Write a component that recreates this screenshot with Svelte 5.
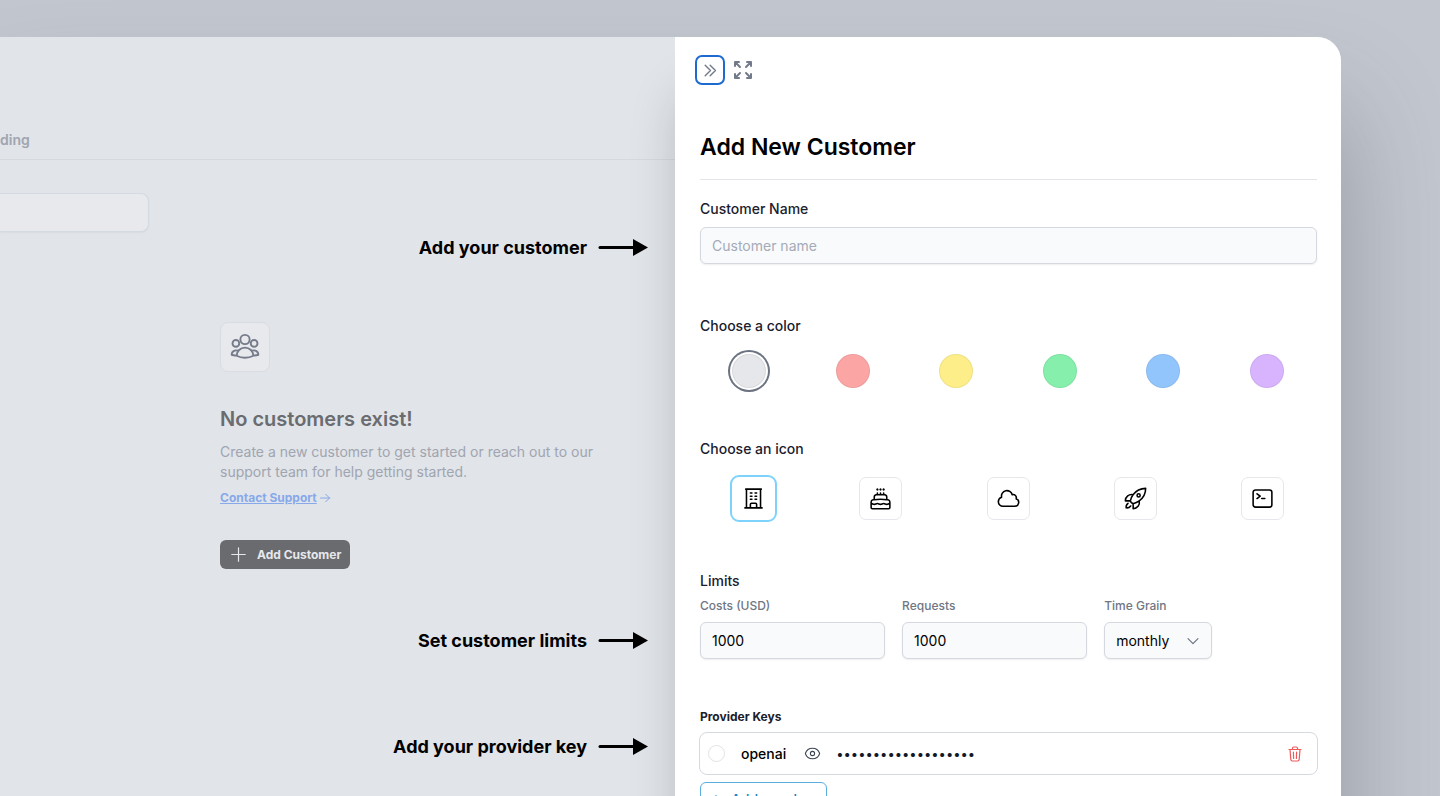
<script>
  const colors = [
    { name: 'Gray', value: '#e5e7eb' },
    { name: 'Red', value: '#fca5a5' },
    { name: 'Yellow', value: '#fdee8a' },
    { name: 'Green', value: '#86efac' },
    { name: 'Blue', value: '#93c5fd' },
    { name: 'Purple', value: '#d8b4fe' }
  ];

  const icons = [
    {
      name: 'Building',
      path: 'M3.75 21h16.5M4.5 3h15M5.25 3v18m13.5-18v18M9 6.75h1.5m-1.5 3h1.5m-1.5 3h1.5m3-6H15m-1.5 3H15m-1.5 3H15M9 21v-3.375c0-.621.504-1.125 1.125-1.125h3.75c.621 0 1.125.504 1.125 1.125V21'
    },
    {
      name: 'Cake',
      path: 'M12 8.25v-1.5m0 1.5c-1.355 0-2.697.056-4.024.166C6.845 8.51 6 9.473 6 10.608v2.513m6-4.871c1.355 0 2.697.056 4.024.166C17.155 8.51 18 9.473 18 10.608v2.513M15 8.25v-1.5m-6 1.5v-1.5m12 9.75-1.5.75a3.354 3.354 0 0 1-3 0 3.354 3.354 0 0 0-3 0 3.354 3.354 0 0 1-3 0 3.354 3.354 0 0 0-3 0 3.354 3.354 0 0 1-3 0L3 16.5m15-3.379a48.474 48.474 0 0 0-6-.371c-2.032 0-4.034.126-6 .371m12 0c.39.049.777.102 1.163.16 1.07.16 1.837 1.094 1.837 2.175v5.169c0 .621-.504 1.125-1.125 1.125H4.125A1.125 1.125 0 0 1 3 20.625v-5.17c0-1.08.768-2.014 1.837-2.174A47.78 47.78 0 0 1 6 13.12M12.265 3.11a.375.375 0 1 1-.53 0L12 2.845l.265.265Zm-3 0a.375.375 0 1 1-.53 0L9 2.845l.265.265Zm6 0a.375.375 0 1 1-.53 0L15 2.845l.265.265Z'
    },
    {
      name: 'Cloud',
      path: 'M2.25 15a4.5 4.5 0 0 0 4.5 4.5H18a3.75 3.75 0 0 0 1.332-7.257 3 3 0 0 0-3.758-3.848 5.25 5.25 0 0 0-10.233 2.33A4.502 4.502 0 0 0 2.25 15Z'
    },
    {
      name: 'Rocket',
      path: 'M15.59 14.37a6 6 0 0 1-5.84 7.38v-4.8m5.84-2.58a14.98 14.98 0 0 0 6.16-12.12A14.98 14.98 0 0 0 9.631 8.41m5.96 5.96a14.926 14.926 0 0 1-5.841 2.58m-.119-8.54a6 6 0 0 0-7.381 5.84h4.8m2.581-5.84a14.927 14.927 0 0 0-2.58 5.84m2.699 2.7c-.103.021-.207.041-.311.06a15.09 15.09 0 0 1-2.448-2.448 14.9 14.9 0 0 1 .06-.312m-2.24 2.39a4.493 4.493 0 0 0-1.757 4.306 4.493 4.493 0 0 0 4.306-1.758M16.5 9a1.5 1.5 0 1 1-3 0 1.5 1.5 0 0 1 3 0Z'
    },
    {
      name: 'Terminal',
      path: 'm6.75 7.5 3 2.25-3 2.25m4.5 0h3m-9 8.25h13.5A2.25 2.25 0 0 0 21 18V6a2.25 2.25 0 0 0-2.25-2.25H5.25A2.25 2.25 0 0 0 3 6v12a2.25 2.25 0 0 0 2.25 2.25Z'
    }
  ];

  const notes = [
    { text: 'Add your customer', top: 198 },
    { text: 'Set customer limits', top: 591 },
    { text: 'Add your provider key', top: 697 }
  ];

  let color = $state('Gray');
  let icon = $state('Building');
  let grain = $state('monthly');
</script>

<div class="scene">
  <div class="window">
    <main class="page">
      <nav class="tabs"><a href="#tab">ding</a></nav>
      <input class="search" type="text" aria-label="Search" />

      <section class="empty">
        <div class="badge">
          <svg width="30" height="30" viewBox="0 0 24 24"><circle cx="12" cy="6" r="3.700" /><circle cx="4.700" cy="9.100" r="2.700" /><circle cx="19.300" cy="9.100" r="2.700" /><path d="M5.300 19c0-3.700 3-6.500 6.700-6.500s6.700 2.800 6.700 6.500c-2 1.100-4.300 1.600-6.700 1.600S7.300 20.100 5.300 19ZM6.600 14.900c-3-.8-5.300.7-5.300 3.300 1.300.5 2.600.7 4 .5M17.400 14.900c3-.8 5.300.7 5.300 3.300-1.300.5-2.600.7-4 .5" /></svg>
        </div>
        <h2>No customers exist!</h2>
        <p>Create a new customer to get started or reach out to our support team for help getting started.</p>
        <a class="support" href="#support">
          <span>Contact Support</span>
          <svg width="12" height="12" viewBox="0 0 24 24"><path d="M13.500 4.500 21 12m0 0-7.500 7.500M21 12H3" /></svg>
        </a>
        <button class="add" type="button">
          <svg width="19" height="19" viewBox="0 0 24 24"><path d="M12 3.500v17M3.500 12h17" /></svg>
          Add Customer
        </button>
      </section>

      {#each notes as note}
        <div class="note" style="top: {note.top}px">
          {note.text}
          <svg width="50" height="20" viewBox="0 0 50 20"><path d="M2 9.500h34" stroke="#000" stroke-width="3" /><path d="M35 1v17l15-8.500z" fill="#000" stroke="none" /></svg>
        </div>
      {/each}
    </main>

    <form class="drawer">
      <div class="tools">
        <button class="collapse" type="button" aria-label="Collapse">
          <svg width="17" height="17" viewBox="0 0 24 24"><path d="m4.500 4.500 7.500 7.500-7.500 7.500m7-15 7.500 7.500-7.500 7.500" /></svg>
        </button>
        <button class="expand" type="button" aria-label="Expand">
          <svg width="24" height="24" viewBox="0 0 24 24"><path d="M4 8V4m0 0h4M4 4l5 5m11-1V4m0 0h-4m4 0l-5 5M4 16v4m0 0h4m-4 0l5-5m11 5l-5-5m5 5v-4m0 4h-4" /></svg>
        </button>
      </div>

      <h1>Add New Customer</h1>

      <div class="block name">
        <label class="title" for="name">Customer Name</label>
        <input id="name" class="field" type="text" placeholder="Customer name" />
      </div>

      <fieldset class="block colors">
        <legend class="title">Choose a color</legend>
        <div class="row">
          {#each colors as c}
            <input type="radio" name="color" aria-label={c.name} value={c.name} bind:group={color} style="background-color: {c.value}" />
          {/each}
        </div>
      </fieldset>

      <fieldset class="block icons">
        <legend class="title">Choose an icon</legend>
        <div class="row">
          {#each icons as i}
            <button type="button" aria-label={i.name} aria-pressed={icon === i.name} onclick={() => (icon = i.name)}>
              <svg width="25" height="25" viewBox="0 0 24 24"><path d={i.path} /></svg>
            </button>
          {/each}
        </div>
      </fieldset>

      <fieldset class="block limits">
        <legend class="title">Limits</legend>
        <div class="grid">
          <div>
            <label for="costs">Costs (USD)</label>
            <input id="costs" class="field" type="text" value="1000" />
          </div>
          <div>
            <label for="requests">Requests</label>
            <input id="requests" class="field" type="text" value="1000" />
          </div>
          <div>
            <label for="grain">Time Grain</label>
            <div class="select">
              <select id="grain" class="field" bind:value={grain}>
                <option>monthly</option>
              </select>
              <svg width="14" height="14" viewBox="0 0 24 24"><path d="m3.500 8 8.500 8.500L20.500 8" /></svg>
            </div>
          </div>
        </div>
      </fieldset>

      <fieldset class="block keys">
        <legend class="title">Provider Keys</legend>
        <div class="key">
          <input id="openai" type="radio" name="provider" value="openai" />
          <label for="openai">openai</label>
          <button class="eye" type="button" aria-label="Show key">
            <svg width="17" height="17" viewBox="0 0 24 24"><path d="M2.036 12.322a1.012 1.012 0 0 1 0-.639C3.423 7.510 7.360 4.500 12 4.500c4.638 0 8.573 3.007 9.963 7.178.070.207.070.431 0 .639C20.577 16.490 16.640 19.500 12 19.500c-4.638 0-8.573-3.007-9.963-7.178Z" /><circle cx="12" cy="12" r="3" /></svg>
          </button>
          <span class="secret">•••••••••••••••••••</span>
          <button class="trash" type="button" aria-label="Delete key">
            <svg width="14" height="16" viewBox="0 0 14 16"><path d="M1 3.500h12M4.500 3.500V2.200c0-.7.400-1.200 1.200-1.200h2.600c.8 0 1.200.5 1.200 1.200v1.300M2 3.500l.8 9.900c.1 1 .6 1.600 1.500 1.600h5.400c.9 0 1.400-.6 1.500-1.600l.8-9.900M5.400 6l.2 6.500M8.600 6l-.2 6.500" /></svg>
          </button>
        </div>
        <button class="new-key" type="button">
          <svg width="14" height="14" viewBox="0 0 24 24"><path d="M12 4v16M4 12h16" /></svg>
          Add new key
        </button>
      </fieldset>
    </form>
  </div>
</div>

<style>
  :global(body) {
    margin: 0;
    overflow: hidden;
  }

  .scene,
  .scene * {
    box-sizing: border-box;
  }

  .scene {
    height: 100vh;
    padding: 37px 99px 0 0;
    overflow: hidden;
    background: #c1c6cf;
    color: #000;
    font-family: Inter, sans-serif;
    font-size: 14px;
    line-height: 20px;
  }

  button,
  input,
  select {
    margin: 0;
    padding: 0;
    border: 0;
    background: none;
    color: inherit;
    font: inherit;
  }

  svg {
    display: block;
    flex: none;
    fill: none;
    stroke: currentColor;
    stroke-width: 1.5;
    stroke-linecap: round;
    stroke-linejoin: round;
  }

  .window {
    display: grid;
    grid-template-columns: 675fr 666fr;
    min-height: 900px;
    overflow: hidden;
    border-radius: 0 24px 0 0;
    background: #e1e4e9;
    box-shadow: 0 75px 100px rgba(75, 72, 75, 0.36);
  }

  .page {
    position: relative;
    min-width: 0;
  }

  .tabs {
    height: 123px;
    padding-top: 93px;
    border-bottom: 1px solid #d6d9e0;
    font-weight: 600;
  }

  .tabs a {
    color: #a0a5b0;
    text-decoration: none;
  }

  .search {
    display: block;
    width: 149px;
    height: 39px;
    margin-top: 33px;
    border: 1px solid #d5d9e1;
    border-left: 0;
    border-radius: 0 8px 8px 0;
    background: #e8e9ed;
    box-shadow: 0 1px 2px rgba(0, 0, 0, 0.04);
  }

  .empty {
    display: flex;
    flex-direction: column;
    align-items: flex-start;
    width: 400px;
    margin: 90px 0 0 220px;
  }

  .badge {
    display: grid;
    place-items: center;
    width: 50px;
    height: 50px;
    border: 1px solid #d9dce2;
    border-radius: 8px;
    background: #e8e9ed;
    color: #757b8a;
  }

  .empty h2 {
    margin: 32px 0 0;
    color: #6a6c70;
    font-size: 20px;
    font-weight: 600;
    line-height: 30px;
  }

  .empty p {
    margin: 8px 0 0;
    color: #a0a5b0;
    line-height: 20px;
  }

  .support {
    display: flex;
    align-items: center;
    gap: 2px;
    margin-top: 6px;
    color: #87a9ea;
    font-size: 12px;
    font-weight: 700;
    text-decoration: none;
  }

  .support svg {
    stroke-width: 2;
  }

  .support span {
    text-decoration: underline;
  }

  .add {
    display: flex;
    align-items: center;
    gap: 9px;
    height: 29px;
    margin-top: 32px;
    padding: 0 9px;
    border-radius: 6px;
    background: #6a6b6f;
    color: #e6e8ec;
    font-size: 12px;
    font-weight: 700;
  }

  .note {
    position: absolute;
    right: 27px;
    display: flex;
    align-items: center;
    gap: 11px;
    font-size: 18px;
    font-weight: 700;
    line-height: 26px;
    white-space: nowrap;
  }

  .drawer {
    position: relative;
    min-width: 0;
    padding: 18px 24px 0 25px;
    background: #fff;
    box-shadow: 0 50px 50px -10px rgba(0, 0, 0, 0.24);
  }

  .tools {
    display: flex;
    align-items: center;
    gap: 6px;
    margin-left: -5px;
    color: #737a89;
  }

  .collapse {
    display: grid;
    place-items: center;
    width: 30px;
    height: 30px;
    border: 2px solid #1d6ad0;
    border-radius: 7px;
  }

  .collapse svg {
    stroke-width: 2;
  }

  .expand svg {
    stroke-width: 2;
  }

  h1 {
    margin: 46px 0 0;
    padding-bottom: 16px;
    border-bottom: 1px solid #e3e5e8;
    font-size: 23px;
    font-weight: 600;
    line-height: 32px;
  }

  .block {
    display: block;
    min-width: 0;
    margin: 0;
    padding: 0;
    border: 0;
  }

  .title {
    display: block;
    padding: 0;
    color: #1a202c;
    font-weight: 500;
  }

  .field {
    display: block;
    width: 100%;
    height: 37px;
    padding: 0 11px;
    border: 1px solid #d5d8de;
    border-radius: 6px;
    background: #f9fafb;
    box-shadow: 0 1px 2px rgba(0, 0, 0, 0.07);
  }

  .field::placeholder {
    color: #a4abb8;
    opacity: 1;
  }

  .name {
    margin-top: 19px;
  }

  .name .field {
    margin-top: 8px;
  }

  .colors {
    margin-top: 52px;
  }

  .row {
    display: flex;
    align-items: center;
    justify-content: space-between;
  }

  .colors .row {
    margin-top: 18px;
    padding: 0 33px 0 32px;
  }

  .colors input {
    appearance: none;
    width: 34px;
    height: 34px;
    border: 1px solid rgba(0, 0, 0, 0.06);
    border-radius: 50%;
  }

  .colors input:checked {
    box-shadow: 0 0 0 2px #fff, 0 0 0 4px #6b7280;
  }

  .icons {
    margin-top: 51px;
  }

  .icons .row {
    margin-top: 16px;
    padding: 0 31px 0 30px;
  }

  .icons button {
    display: grid;
    place-items: center;
    width: 43px;
    height: 43px;
    margin: 0 2px;
    border: 1px solid #e5e7eb;
    border-radius: 7px;
  }

  .icons button[aria-pressed='true'] {
    width: 47px;
    height: 47px;
    margin: 0;
    border: 2px solid #7dd3fc;
    border-radius: 9px;
  }

  .limits {
    margin-top: 49px;
  }

  .grid {
    display: grid;
    grid-template-columns: 30% 30% 1fr;
    gap: 17px;
    margin-top: 5px;
  }

  .grid label {
    display: block;
    margin-bottom: 6px;
    color: #6f7684;
    font-size: 12px;
    font-weight: 500;
  }

  .select {
    position: relative;
    width: 108px;
  }

  .select .field {
    appearance: none;
  }

  .select svg {
    position: absolute;
    top: 12px;
    right: 12px;
    color: #6b7280;
    stroke-width: 2;
    pointer-events: none;
  }

  .keys {
    margin-top: 48px;
  }

  .keys .title {
    font-size: 12px;
    font-weight: 700;
  }

  .key {
    display: flex;
    align-items: center;
    height: 43px;
    margin: 5px -1px 0;
    padding: 0 15px 0 8px;
    border: 1px solid #d5d9e0;
    border-radius: 8px;
  }

  .key input {
    appearance: none;
    width: 17px;
    height: 17px;
    border: 1px solid #e1e3e7;
    border-radius: 50%;
  }

  .key label {
    margin-left: 16px;
    font-weight: 500;
  }

  .eye {
    margin-left: 18px;
    color: #3c4454;
  }

  .secret {
    margin-left: 15px;
    color: #111827;
    font-size: 13px;
  }

  .trash {
    margin-left: auto;
    color: #ee5a5a;
  }

  .trash svg {
    stroke-width: 1.2;
  }

  .new-key {
    display: flex;
    align-items: center;
    gap: 8px;
    width: 127px;
    height: 36px;
    margin-top: 7px;
    padding: 0 8px;
    border: 1px solid #5aaede;
    border-radius: 6px;
    color: #1284c7;
    font-weight: 500;
  }
</style>
